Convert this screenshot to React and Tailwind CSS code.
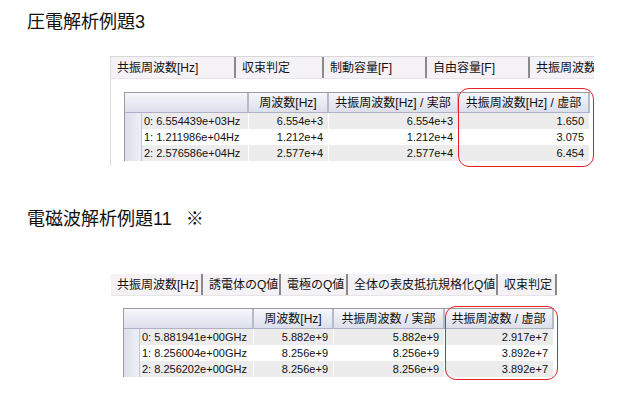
import React from 'react';

const font = { fontFamily: '"Liberation Sans", "Noto Sans CJK JP", sans-serif' };

const panel1 = {
  tabs: [
    { label: '共振周波数[Hz]', w: 125 },
    { label: '収束判定', w: 88 },
    { label: '制動容量[F]', w: 103 },
    { label: '自由容量[F]', w: 103 },
    { label: '共振周波数', w: 64, last: true },
  ],
  cols: [
    { label: '', w: 124 },
    { label: '周波数[Hz]', w: 80 },
    { label: '共振周波数[Hz] / 実部', w: 130 },
    { label: '共振周波数[Hz] / 虚部', w: 131 },
  ],
  indent: 17,
  rows: [
    ['0: 6.554439e+03Hz', '6.554e+3', '6.554e+3', '1.650'],
    ['1: 1.211986e+04Hz', '1.212e+4', '1.212e+4', '3.075'],
    ['2: 2.576586e+04Hz', '2.577e+4', '2.577e+4', '6.454'],
  ],
};

const panel2 = {
  tabs: [
    { label: '共振周波数[Hz]', w: 92 },
    { label: '誘電体のQ値', w: 78 },
    { label: '電極のQ値', w: 67 },
    { label: '全体の表皮抵抗規格化Q値', w: 150 },
    { label: '収束判定', w: 59 },
  ],
  cols: [
    { label: '', w: 130 },
    { label: '周波数[Hz]', w: 80 },
    { label: '共振周波数 / 実部', w: 111 },
    { label: '共振周波数 / 虚部', w: 109 },
  ],
  indent: 16,
  rows: [
    ['0: 5.881941e+00GHz', '5.882e+9', '5.882e+9', '2.917e+7'],
    ['1: 8.256004e+00GHz', '8.256e+9', '8.256e+9', '3.892e+7'],
    ['2: 8.256202e+00GHz', '8.256e+9', '8.256e+9', '3.892e+7'],
  ],
};

function TabStrip({ tabs, height }) {
  return (
    <div className="flex bg-[#f4f2f5] border-b border-[#e6e4e8] overflow-hidden" style={{ height }}>
      {tabs.map((t, i) => (
        <div
          key={i}
          className={`shrink-0 flex items-center pl-[6px] whitespace-nowrap text-[12px] text-[#111] ${t.last ? '' : 'border-r-2 border-[#8a8a8a]'}`}
          style={{ width: t.w }}
        >
          {t.label}
        </div>
      ))}
    </div>
  );
}

function DataTable({ cols, rows, indent, box }) {
  return (
    <div className="relative w-fit">
      <div className="border-l border-t border-[#9c9c9c]">
        <div className="flex h-[20px] bg-linear-to-b from-[#f6f6fb] to-[#dcdfeb] border-b border-[#aeb2c4]">
          {cols.map((c, i) => (
            <div
              key={i}
              className="shrink-0 flex items-center justify-center border-r-2 border-[#b6bacb] text-[12px] text-[#111] whitespace-nowrap"
              style={{ width: c.w }}
            >
              {c.label}
            </div>
          ))}
        </div>
        {rows.map((r, ri) => (
          <div key={ri} className={`flex h-[16px] ${ri % 2 === 0 ? 'bg-[#ececec]' : 'bg-white'}`}>
            <div className="shrink-0 flex" style={{ width: cols[0].w }}>
              <div className="shrink-0 bg-linear-to-r from-[#dcdeea] to-[#eeeff6] border-r border-[#c4c6d4]" style={{ width: indent }} />
              <div className="flex-1 min-w-0 overflow-hidden pl-[2px] text-[11px] leading-[16px] text-[#111] whitespace-nowrap border-r border-white">
                {r[0]}
              </div>
            </div>
            {r.slice(1).map((v, ci) => (
              <div
                key={ci}
                className="shrink-0 text-right pr-[5px] text-[11px] leading-[16px] text-[#111] border-r border-white"
                style={{ width: cols[ci + 1].w }}
              >
                {v}
              </div>
            ))}
          </div>
        ))}
      </div>
      <div
        className="absolute border border-[#e8202a] rounded-[11px] pointer-events-none"
        style={{ left: box.left, top: box.top, width: box.w, height: box.h }}
      />
    </div>
  );
}

export default function App() {
  return (
    <div className="w-[627px] h-[394px] bg-white overflow-hidden pt-[12px]" style={font}>
      <h1 className="ml-[27px] h-[20px] text-[18px] leading-[20px] text-[#111] font-normal">
        圧電解析例題3
      </h1>

      <div className="mt-[24px] ml-[110px] w-[484px] border-l border-[#dcdcdc]">
        <div className="border-t border-[#d8d8d8]">
          <TabStrip tabs={panel1.tabs} height={22} />
        </div>
        <div className="pl-[13px] pt-[13px] pb-[5px]">
          <DataTable
            cols={panel1.cols}
            rows={panel1.rows}
            indent={panel1.indent}
            box={{ left: 334, top: -4, w: 136, h: 79 }}
          />
        </div>
      </div>

      <h1 className="mt-[43px] ml-[27px] h-[20px] text-[18px] leading-[20px] text-[#111] font-normal">
        電磁波解析例題11<span className="ml-[14px]">※</span>
      </h1>

      <div className="mt-[45px] ml-[111px] w-[446px]">
        <TabStrip tabs={panel2.tabs} height={22} />
        <div className="pl-[12px] pt-[12px]">
          <DataTable
            cols={panel2.cols}
            rows={panel2.rows}
            indent={panel2.indent}
            box={{ left: 322, top: -2, w: 113, h: 74 }}
          />
        </div>
      </div>
    </div>
  );
}
